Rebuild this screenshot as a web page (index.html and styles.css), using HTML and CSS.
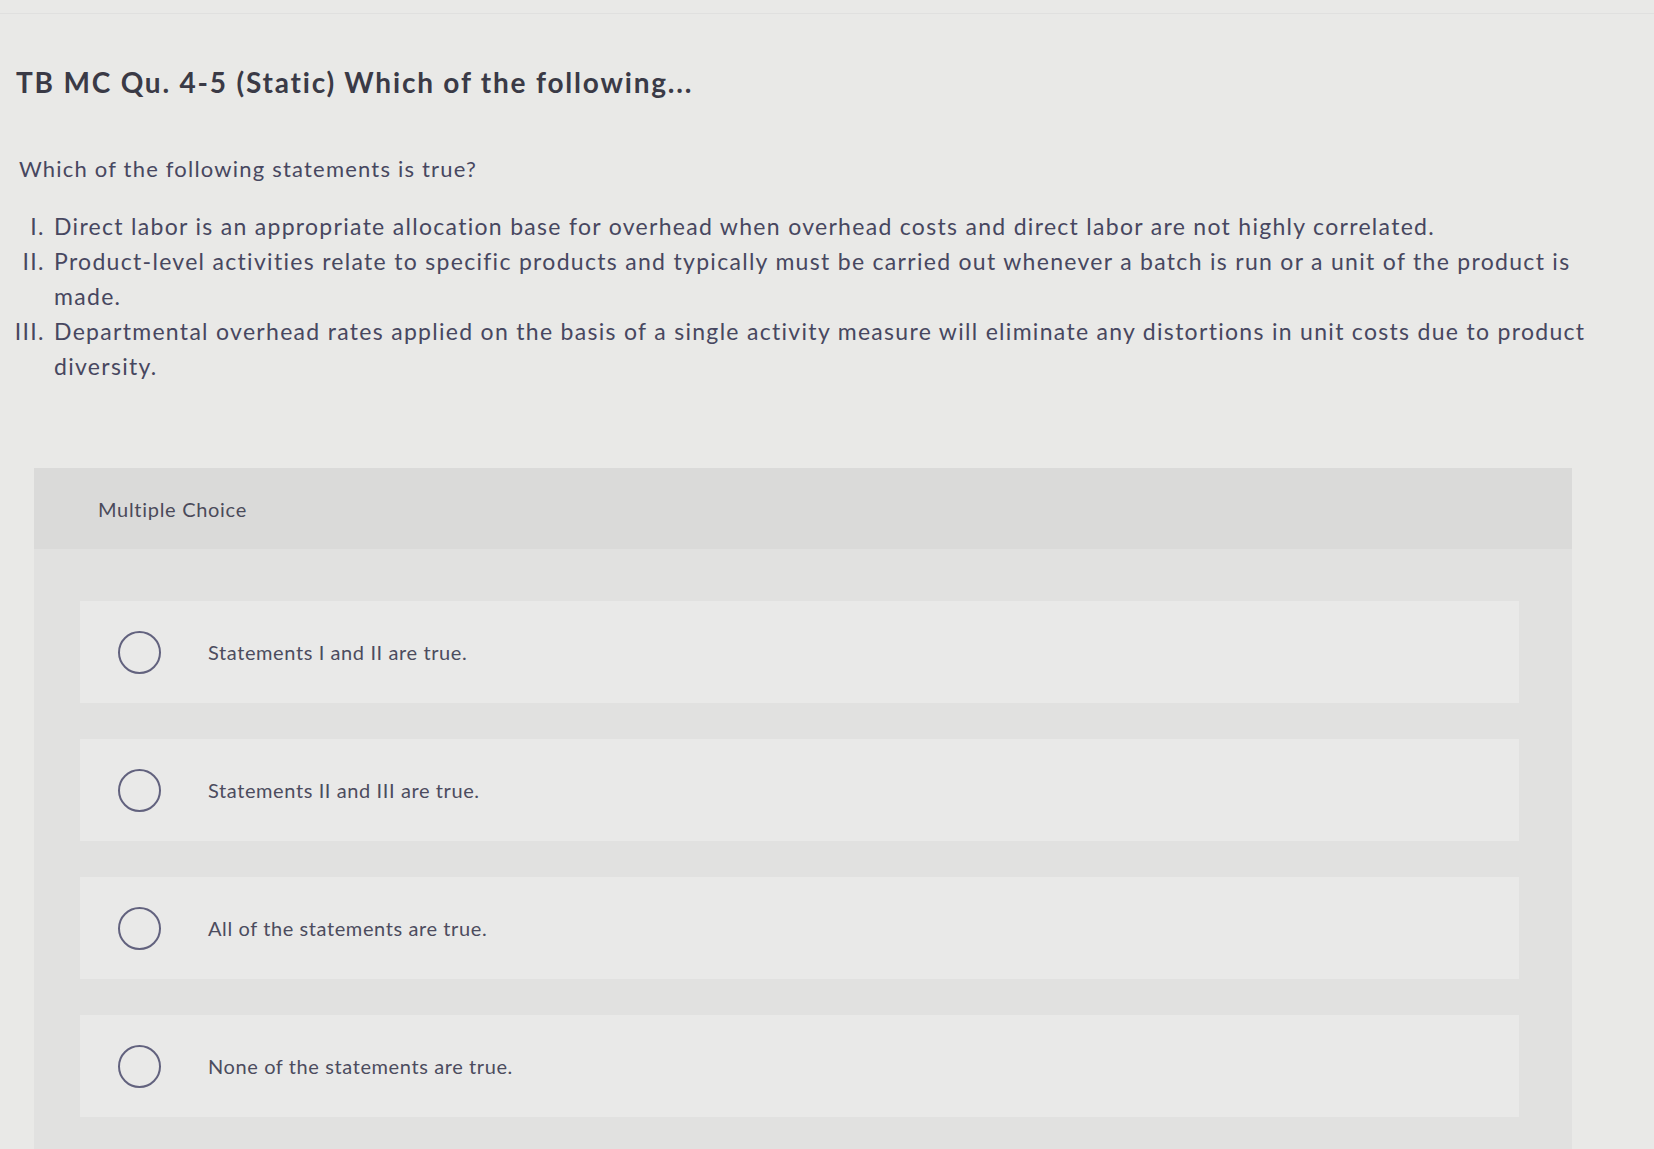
FILE: index.html
```html
<!DOCTYPE html>
<html lang="en">
<head>
<meta charset="utf-8">
<title>TB MC Qu. 4-5 (Static)</title>
<link rel="stylesheet" href="styles.css">
</head>
<body>
<div class="page">
  <h1 class="title">TB MC Qu. 4-5 (Static) Which of the following...</h1>
  <p class="question">Which of the following statements is true?</p>
  <ol class="statements">
    <li>Direct labor is an appropriate allocation base for overhead when overhead costs and direct labor are not highly correlated.</li>
    <li>Product-level activities relate to specific products and typically must be carried out whenever a batch is run or a unit of the product is made.</li>
    <li>Departmental overhead rates applied on the basis of a single activity measure will eliminate any distortions in unit costs due to product diversity.</li>
  </ol>
  <section class="panel">
    <div class="panel-head">Multiple Choice</div>
    <div class="choices">
      <label class="choice"><span class="radio"></span><span class="choice-text">Statements I and II are true.</span></label>
      <label class="choice"><span class="radio"></span><span class="choice-text">Statements II and III are true.</span></label>
      <label class="choice"><span class="radio"></span><span class="choice-text">All of the statements are true.</span></label>
      <label class="choice"><span class="radio"></span><span class="choice-text">None of the statements are true.</span></label>
    </div>
  </section>
</div>
</body>
</html>
```
FILE: styles.css
```css
html, body {
  margin: 0;
  padding: 0;
  background: #e8e8e6;
  height: 100%;
  overflow: hidden;
}
body {
  font-family: Lato, "Open Sans", Arial, sans-serif;
  font-variant-ligatures: none;
  color: #474760;
}
.page {
  padding: 0 0 0 16px;
  border-top: 1px solid transparent;
  background: linear-gradient(#e0e0df, #e0e0df) 0 12px / 100% 1px no-repeat, #e9e9e7;
  min-height: 1149px;
  box-sizing: border-box;
}
.title {
  margin: 65px 0 0;
  font-size: 28px;
  line-height: 32px;
  font-weight: 700;
  color: #3a3a46;
  letter-spacing: 1.8px;
}
.question {
  margin: 57px 0 0 3px;
  font-size: 22px;
  line-height: 28px;
  letter-spacing: 1.2px;
}
.statements {
  margin: 26px 0 0;
  padding-left: 36px;
  width: 1579px;
  box-sizing: border-box;
  list-style-type: upper-roman;
  font-size: 23px;
  line-height: 35px;
  letter-spacing: 1.3px;
}
.statements li {
  padding-left: 2px;
}
.panel {
  margin: 84px 0 0 18px;
  width: 1538px;
  background: #e1e1e0;
  padding-bottom: 40px;
}
.panel-head {
  height: 81px;
  background: #dadad9;
  padding-left: 64px;
  display: flex;
  align-items: center;
  font-size: 20px;
  letter-spacing: 0.7px;
  color: #4a4a5a;
}
.choices {
  display: flex;
  flex-direction: column;
  gap: 36px;
  padding: 52px 53px 0 46px;
}
.choice {
  display: flex;
  align-items: center;
  height: 102px;
  background: #e9e9e8;
  padding-left: 38px;
}
.radio {
  width: 39px;
  height: 39px;
  border: 2px solid #62627e;
  border-radius: 50%;
  flex: none;
}
.choice-text {
  margin-left: 47px;
  font-size: 20px;
  letter-spacing: 0.6px;
  color: #4c4c5e;
}
```
